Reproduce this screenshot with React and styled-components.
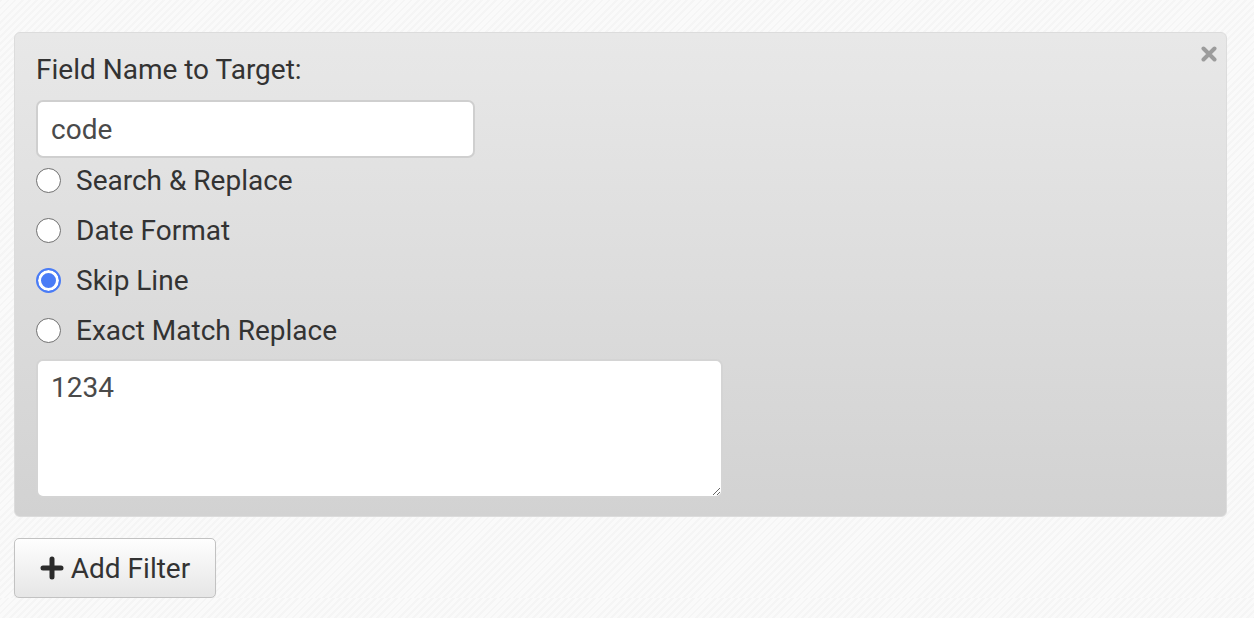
import React from 'react'
import styled, { createGlobalStyle } from 'styled-components'

const GlobalStyle = createGlobalStyle`
  html, body {
    margin: 0;
    padding: 0;
    background-color: #fafafa;
    background-image: repeating-linear-gradient(
      135deg,
      rgba(0, 0, 0, 0.018) 0px,
      rgba(0, 0, 0, 0.018) 2px,
      transparent 2px,
      transparent 5px
    );
    font-family: Roboto, "Liberation Sans", sans-serif;
    color: #333;
  }
`

const Page = styled.div`
  padding: 32px 27px 0 14px;
  display: flex;
  flex-direction: column;
  align-items: flex-start;
`

const FilterPanel = styled.div`
  position: relative;
  box-sizing: border-box;
  width: 100%;
  height: 485px;
  padding: 18px 21px 0 21px;
  border: 1px solid #dcdcdc;
  border-radius: 6px;
  background: linear-gradient(to bottom, #e8e8e8, #d2d2d2);
  display: flex;
  flex-direction: column;
  align-items: flex-start;
`

const CloseButton = styled.span`
  position: absolute;
  top: 13px;
  right: 9px;
  display: flex;
  cursor: pointer;
`

const FieldLabel = styled.label`
  font-size: 28px;
  line-height: 38px;
  color: #333;
  margin-bottom: 11px;
`

const TextInput = styled.input`
  box-sizing: border-box;
  width: 439px;
  height: 58px;
  padding: 0 13px;
  border: 2px solid #cfcfcf;
  border-radius: 7px;
  background: #fff;
  font-family: inherit;
  font-size: 28px;
  color: #4a4a4a;
  outline: none;
`

const RadioList = styled.div`
  display: flex;
  flex-direction: column;
  gap: 8px;
  margin-top: 1px;
`

const RadioRow = styled.label`
  display: flex;
  align-items: center;
  gap: 15px;
  height: 42px;
  font-size: 28px;
  color: #333;
  cursor: pointer;
`

const Radio = styled.input`
  appearance: none;
  margin: 0;
  width: 25px;
  height: 25px;
  border-radius: 50%;
  border: 1.5px solid #707070;
  background: #fff;
  box-sizing: border-box;

  &:checked {
    border: 2px solid #4a7cf6;
    background: #4a7cf6;
    box-shadow: inset 0 0 0 3px #fff;
  }
`

const TextArea = styled.textarea`
  box-sizing: border-box;
  width: 687px;
  height: 139px;
  margin-top: 8px;
  padding: 10px 13px;
  border: 2px solid #d4d4d4;
  border-radius: 7px;
  background: #fff;
  font-family: inherit;
  font-size: 28px;
  line-height: 34px;
  color: #4a4a4a;
  outline: none;
`

const AddButton = styled.button`
  margin-top: 21px;
  box-sizing: border-box;
  height: 60px;
  width: 202px;
  display: flex;
  align-items: center;
  justify-content: center;
  gap: 7px;
  border: 1.5px solid #c2c2c2;
  border-radius: 5px;
  background: linear-gradient(to bottom, #fefefe, #e6e6e6);
  box-shadow: 0 1px 1px rgba(0, 0, 0, 0.08);
  font-family: inherit;
  font-size: 28px;
  color: #333;
  cursor: pointer;
`

const CloseIcon = () => (
  <svg width="16" height="16" viewBox="0 0 16 16">
    <path d="M2.5 2.5l11 11M13.5 2.5l-11 11" stroke="#9c9c9c" strokeWidth="4" strokeLinecap="round" />
  </svg>
)

const PlusIcon = () => (
  <svg width="24" height="24" viewBox="0 0 24 24">
    <path d="M12 3v18M3 12h18" stroke="#2b2b2b" strokeWidth="5" strokeLinecap="round" />
  </svg>
)

const options = ['Search & Replace', 'Date Format', 'Skip Line', 'Exact Match Replace']

export default function App() {
  return (
    <>
      <GlobalStyle />
      <Page>
        <FilterPanel>
          <CloseButton><CloseIcon /></CloseButton>
          <FieldLabel>Field Name to Target:</FieldLabel>
          <TextInput defaultValue="code" />
          <RadioList>
            {options.map(opt => (
              <RadioRow key={opt}>
                <Radio type="radio" name="filter" defaultChecked={opt === 'Skip Line'} />
                {opt}
              </RadioRow>
            ))}
          </RadioList>
          <TextArea defaultValue="1234" />
        </FilterPanel>
        <AddButton>
          <PlusIcon />
          Add Filter
        </AddButton>
      </Page>
    </>
  )
}
